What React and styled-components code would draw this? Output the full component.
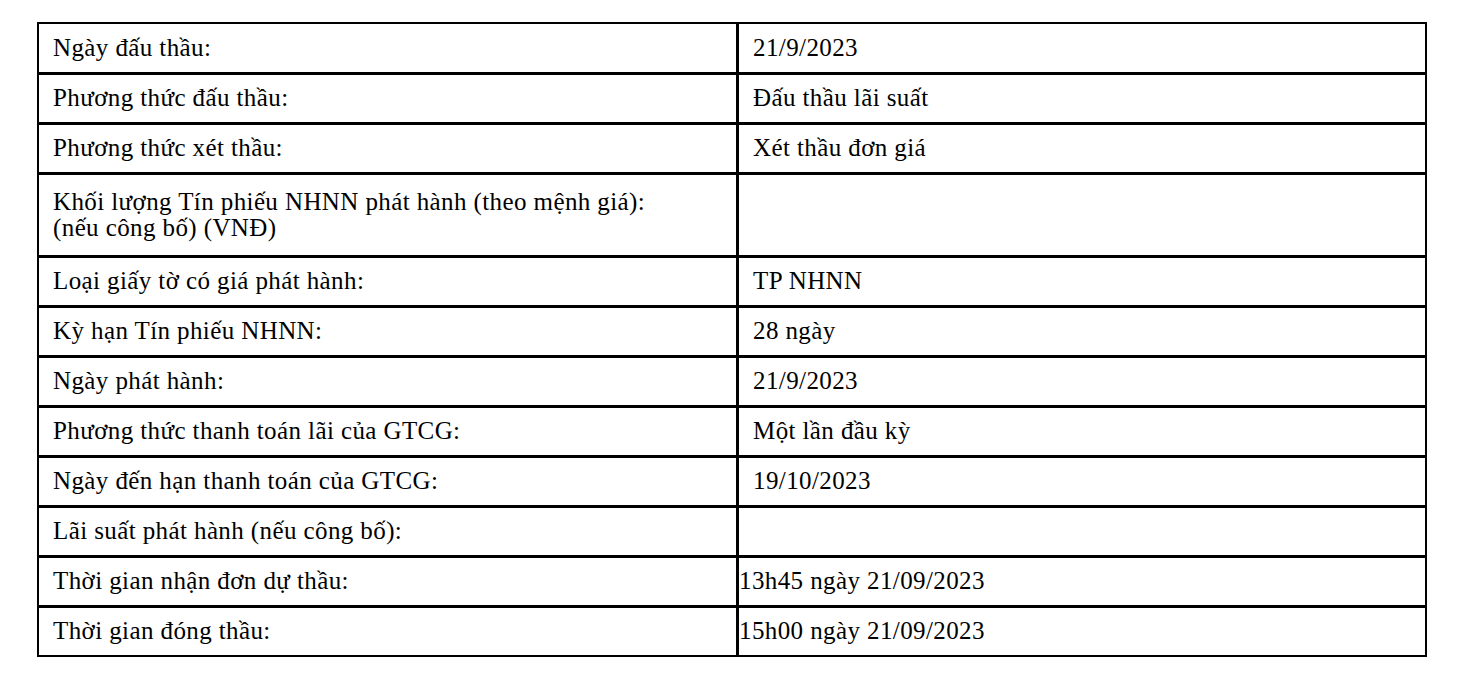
import React from 'react';
import styled, { createGlobalStyle } from 'styled-components';

const GlobalStyle = createGlobalStyle`
  html, body {
    margin: 0;
    padding: 0;
    background: #ffffff;
  }
  body {
    font-family: "Liberation Serif", "Times New Roman", serif;
    color: #000000;
  }
`;

const Page = styled.div`
  padding: 22px 0 0 37px;
`;

const Table = styled.table`
  width: 1390px;
  border-collapse: collapse;
  table-layout: fixed;
  font-family: "Liberation Serif", "Times New Roman", serif;
  font-size: 25px;
  letter-spacing: 0.4px;
  line-height: 26px;
`;

const Row = styled.tr`
  height: ${props => props.$height || 50}px;

  &:first-child td {
    border-top-width: 2px;
  }

  &:last-child td {
    border-bottom-width: 2px;
  }
`;

const Cell = styled.td`
  border: 3px solid #000;
  padding: 0 0 0 ${props => (props.$flush ? 0 : 14)}px;
  vertical-align: middle;
  white-space: pre-line;

  &:first-child {
    border-left-width: 2px;
    width: 683px;
  }

  &:last-child {
    border-right-width: 2px;
  }
`;

const rows = [
  { label: 'Ngày đấu thầu:', value: '21/9/2023' },
  { label: 'Phương thức đấu thầu:', value: 'Đấu thầu lãi suất' },
  { label: 'Phương thức xét thầu:', value: 'Xét thầu đơn giá' },
  {
    label: 'Khối lượng Tín phiếu NHNN phát hành (theo mệnh giá):\n(nếu công bố) (VNĐ)',
    value: '',
    height: 83
  },
  { label: 'Loại giấy tờ có giá phát hành:', value: 'TP NHNN' },
  { label: 'Kỳ hạn Tín phiếu NHNN:', value: '28 ngày' },
  { label: 'Ngày phát hành:', value: '21/9/2023' },
  { label: 'Phương thức thanh toán lãi của GTCG:', value: 'Một lần đầu kỳ' },
  { label: 'Ngày đến hạn thanh toán của GTCG:', value: '19/10/2023' },
  { label: 'Lãi suất phát hành (nếu công bố):', value: '' },
  { label: 'Thời gian nhận đơn dự thầu:', value: '13h45 ngày 21/09/2023', flush: true },
  { label: 'Thời gian đóng thầu:', value: '15h00 ngày 21/09/2023', flush: true }
];

const App = () => {
  return (
    <Page>
      <GlobalStyle />
      <Table>
        <tbody>
          {rows.map(row => (
            <Row key={row.label} $height={row.height}>
              <Cell>{row.label}</Cell>
              <Cell $flush={row.flush}>{row.value}</Cell>
            </Row>
          ))}
        </tbody>
      </Table>
    </Page>
  );
};

export default App;
